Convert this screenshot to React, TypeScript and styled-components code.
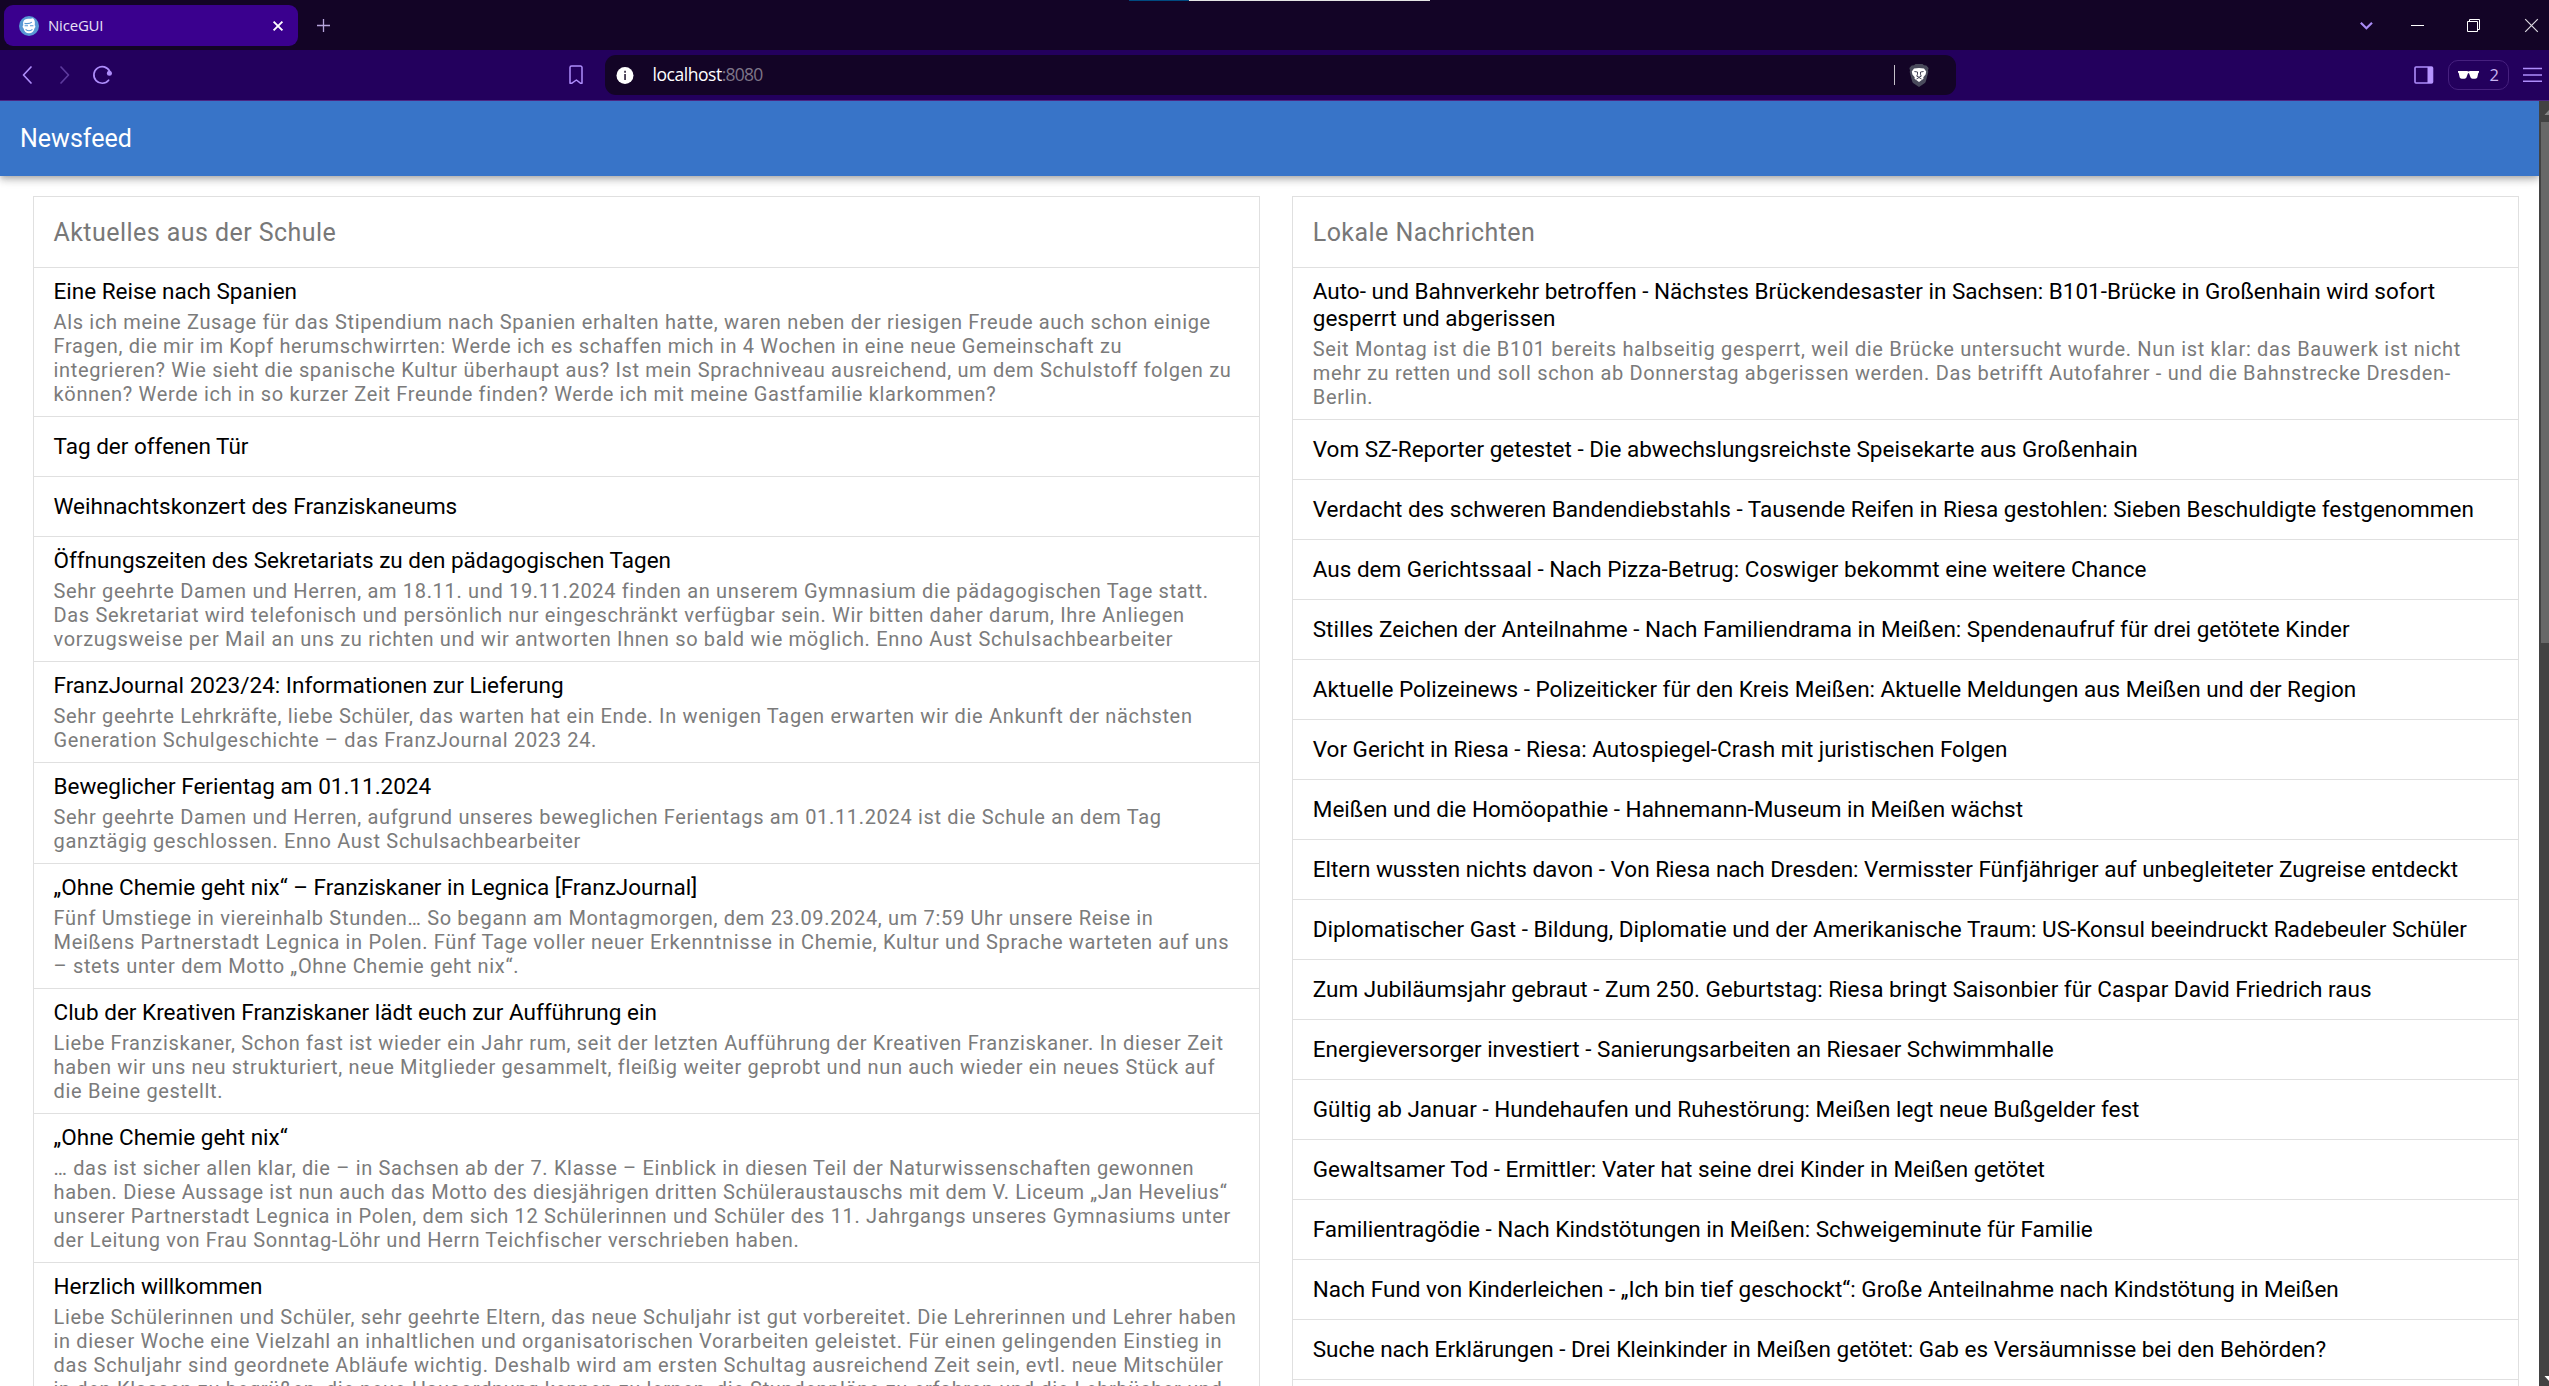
import React from "react";
import styled, { createGlobalStyle } from "styled-components";

const GlobalStyle = createGlobalStyle`
  * { box-sizing: border-box; }
  html, body { margin: 0; padding: 0; background: #fff; overflow: hidden; }
`;

const UI_FONT = '"Open Sans", "Noto Sans", sans-serif';

const Window = styled.div`
  display: flex;
  flex-direction: column;
  width: 2549px;
  height: 1386px;
  overflow: hidden;
  background: #fff;
  font-family: Roboto, sans-serif;
`;

const TabStrip = styled.div`
  position: relative;
  display: flex;
  flex: none;
  align-items: center;
  justify-content: space-between;
  height: 50px;
  padding: 0 11px 0 4px;
  background: #130426;
  font-family: ${UI_FONT};
`;

const EdgeMark = styled.div`
  position: absolute;
  top: 0;
  left: 1129px;
  width: 301px;
  height: 1px;
  background: linear-gradient(to right, #004a80 60px, #e4e6e4 60px);
`;

const Group = styled.div`
  display: flex;
  align-items: center;
`;

const Tab = styled.div`
  display: flex;
  align-items: center;
  width: 294px;
  height: 41px;
  margin: 1px 19px 0 0;
  padding: 0 15px;
  border-radius: 9px;
  background: #3a008e;
`;

const TabTitle = styled.span`
  flex: 1;
  margin-left: 9px;
  padding-bottom: 2px;
  color: #e9e2f6;
  font-size: 15px;
  line-height: 20px;
  letter-spacing: -0.2px;
`;

const Toolbar = styled.div`
  display: flex;
  flex: none;
  align-items: center;
  height: 51px;
  padding: 0 6px 0 22px;
  border-bottom: 1px solid #4c2683;
  background: #23005d;
  font-family: ${UI_FONT};
`;

const NavButtons = styled(Group)`
  width: 546px;
`;

const AddressBar = styled.div`
  display: flex;
  align-items: center;
  width: 1351px;
  height: 40px;
  margin-left: 21px;
  padding: 0 27px 0 11px;
  border-radius: 11px;
  background: #130426;
`;

const Address = styled.span`
  flex: 1;
  margin-left: 18.5px;
  padding-bottom: 1.5px;
  color: #fff;
  font-size: 17.5px;
  line-height: 24px;
  letter-spacing: -0.45px;
`;

const Port = styled.span`
  color: #7d7588;
  letter-spacing: -0.8px;
`;

const AddressDivider = styled.div`
  width: 1px;
  height: 20px;
  margin-right: 14px;
  background: #c4c0c9;
`;

const ToolbarEnd = styled(Group)`
  margin-left: auto;
`;

const PrivatePill = styled.div`
  display: flex;
  align-items: center;
  justify-content: space-between;
  width: 61px;
  height: 30px;
  margin: 0 14px;
  padding: 0 9px;
  border: 1px solid #46207f;
  border-radius: 10px;
  color: #c9b6f3;
  font-size: 16.5px;
  line-height: 26px;
`;

const PillCount = styled.span`
  padding-bottom: 1px;
`;

const Viewport = styled.div`
  display: flex;
  flex: 1;
  min-height: 0;
`;

const Page = styled.div`
  display: flex;
  flex: 1;
  flex-direction: column;
  min-width: 0;
  overflow: hidden;
`;

const Header = styled.header`
  z-index: 1;
  flex: none;
  height: 75px;
  padding-left: 20px;
  background: #3874c8;
  box-shadow:
    0 2.5px 5px -1.25px rgba(0, 0, 0, 0.2),
    0 5px 6.25px rgba(0, 0, 0, 0.14),
    0 1.25px 12.5px rgba(0, 0, 0, 0.12);
  color: #fff;
  font-size: 25px;
  line-height: 76px;
`;

const Columns = styled.main`
  display: grid;
  grid-template-columns: 1fr 1fr;
  flex: 1;
  gap: 32px;
  min-height: 0;
  padding: 20px 20px 0 32.5px;
`;

const List = styled.section`
  border: 1px solid #e0e0e0;
  border-bottom: none;
`;

const ListTitle = styled.div`
  height: 71px;
  padding: 20px 20px 0;
  border-bottom: 1px solid #e0e0e0;
  color: #787878;
  font-size: 25px;
  line-height: 31px;
  letter-spacing: 0.4465px;
`;

const Item = styled.article`
  display: flex;
  flex-direction: column;
  justify-content: center;
  min-height: 60px;
  padding: 10px 20px;
  border-bottom: 1px solid #e0e0e0;
`;

const ItemTitle = styled.div`
  color: #000;
  font-size: 22.5px;
  line-height: 27px;
`;

const ItemCaption = styled.div`
  margin-top: 5px;
  color: #7b7b7b;
  font-size: 20px;
  line-height: 24px;
  letter-spacing: 0.6666px;
`;

const Scrollbar = styled.div`
  display: flex;
  flex: none;
  flex-direction: column;
  justify-content: space-between;
  width: 10px;
  overflow: hidden;
  background: #424242;
`;

const Thumb = styled.div`
  width: 8px;
  height: 521px;
  margin: 0 0 auto 2px;
  background: #686868;
`;

const Icon = styled.svg<{ $left?: number }>`
  display: block;
  flex: none;
  margin-left: ${(p) => p.$left ?? 0}px;
  overflow: visible;
  fill: none;
`;

type Entry = { title: string; text?: string };

const school: Entry[] = [
  {
    title: "Eine Reise nach Spanien",
    text: "Als ich meine Zusage für das Stipendium nach Spanien erhalten hatte, waren neben der riesigen Freude auch schon einige Fragen, die mir im Kopf herumschwirrten: Werde ich es schaffen mich in 4 Wochen in eine neue Gemeinschaft zu integrieren? Wie sieht die spanische Kultur überhaupt aus? Ist mein Sprachniveau ausreichend, um dem Schulstoff folgen zu können? Werde ich in so kurzer Zeit Freunde finden? Werde ich mit meine Gastfamilie klarkommen?",
  },
  { title: "Tag der offenen Tür" },
  { title: "Weihnachtskonzert des Franziskaneums" },
  {
    title: "Öffnungszeiten des Sekretariats zu den pädagogischen Tagen",
    text: "Sehr geehrte Damen und Herren, am 18.11. und 19.11.2024 finden an unserem Gymnasium die pädagogischen Tage statt. Das Sekretariat wird telefonisch und persönlich nur eingeschränkt verfügbar sein. Wir bitten daher darum, Ihre Anliegen vorzugsweise per Mail an uns zu richten und wir antworten Ihnen so bald wie möglich. Enno Aust Schulsachbearbeiter",
  },
  {
    title: "FranzJournal 2023/24: Informationen zur Lieferung",
    text: "Sehr geehrte Lehrkräfte, liebe Schüler, das warten hat ein Ende. In wenigen Tagen erwarten wir die Ankunft der nächsten Generation Schulgeschichte – das FranzJournal 2023 24.",
  },
  {
    title: "Beweglicher Ferientag am 01.11.2024",
    text: "Sehr geehrte Damen und Herren, aufgrund unseres beweglichen Ferientags am 01.11.2024 ist die Schule an dem Tag ganztägig geschlossen. Enno Aust Schulsachbearbeiter",
  },
  {
    title: "„Ohne Chemie geht nix“ – Franziskaner in Legnica [FranzJournal]",
    text: "Fünf Umstiege in viereinhalb Stunden… So begann am Montagmorgen, dem 23.09.2024, um 7:59 Uhr unsere Reise in Meißens Partnerstadt Legnica in Polen. Fünf Tage voller neuer Erkenntnisse in Chemie, Kultur und Sprache warteten auf uns – stets unter dem Motto „Ohne Chemie geht nix“.",
  },
  {
    title: "Club der Kreativen Franziskaner lädt euch zur Aufführung ein",
    text: "Liebe Franziskaner, Schon fast ist wieder ein Jahr rum, seit der letzten Aufführung der Kreativen Franziskaner. In dieser Zeit haben wir uns neu strukturiert, neue Mitglieder gesammelt, fleißig weiter geprobt und nun auch wieder ein neues Stück auf die Beine gestellt.",
  },
  {
    title: "„Ohne Chemie geht nix“",
    text: "… das ist sicher allen klar, die – in Sachsen ab der 7. Klasse – Einblick in diesen Teil der Naturwissenschaften gewonnen haben. Diese Aussage ist nun auch das Motto des diesjährigen dritten Schüleraustauschs mit dem V. Liceum „Jan Hevelius“ unserer Partnerstadt Legnica in Polen, dem sich 12 Schülerinnen und Schüler des 11. Jahrgangs unseres Gymnasiums unter der Leitung von Frau Sonntag-Löhr und Herrn Teichfischer verschrieben haben.",
  },
  {
    title: "Herzlich willkommen",
    text: "Liebe Schülerinnen und Schüler, sehr geehrte Eltern, das neue Schuljahr ist gut vorbereitet. Die Lehrerinnen und Lehrer haben in dieser Woche eine Vielzahl an inhaltlichen und organisatorischen Vorarbeiten geleistet. Für einen gelingenden Einstieg in das Schuljahr sind geordnete Abläufe wichtig. Deshalb wird am ersten Schultag ausreichend Zeit sein, evtl. neue Mitschüler in den Klassen zu begrüßen, die neue Hausordnung kennen zu lernen, die Stundenpläne zu erfahren und die Lehrbücher und",
  },
];

const local: Entry[] = [
  {
    title: "Auto- und Bahnverkehr betroffen - Nächstes Brückendesaster in Sachsen: B101-Brücke in Großenhain wird sofort gesperrt und abgerissen",
    text: "Seit Montag ist die B101 bereits halbseitig gesperrt, weil die Brücke untersucht wurde. Nun ist klar: das Bauwerk ist nicht mehr zu retten und soll schon ab Donnerstag abgerissen werden. Das betrifft Autofahrer - und die Bahnstrecke Dresden-Berlin.",
  },
  { title: "Vom SZ-Reporter getestet - Die abwechslungsreichste Speisekarte aus Großenhain" },
  { title: "Verdacht des schweren Bandendiebstahls - Tausende Reifen in Riesa gestohlen: Sieben Beschuldigte festgenommen" },
  { title: "Aus dem Gerichtssaal - Nach Pizza-Betrug: Coswiger bekommt eine weitere Chance" },
  { title: "Stilles Zeichen der Anteilnahme - Nach Familiendrama in Meißen: Spendenaufruf für drei getötete Kinder" },
  { title: "Aktuelle Polizeinews - Polizeiticker für den Kreis Meißen: Aktuelle Meldungen aus Meißen und der Region" },
  { title: "Vor Gericht in Riesa - Riesa: Autospiegel-Crash mit juristischen Folgen" },
  { title: "Meißen und die Homöopathie - Hahnemann-Museum in Meißen wächst" },
  { title: "Eltern wussten nichts davon - Von Riesa nach Dresden: Vermisster Fünfjähriger auf unbegleiteter Zugreise entdeckt" },
  { title: "Diplomatischer Gast - Bildung, Diplomatie und der Amerikanische Traum: US-Konsul beeindruckt Radebeuler Schüler" },
  { title: "Zum Jubiläumsjahr gebraut - Zum 250. Geburtstag: Riesa bringt Saisonbier für Caspar David Friedrich raus" },
  { title: "Energieversorger investiert - Sanierungsarbeiten an Riesaer Schwimmhalle" },
  { title: "Gültig ab Januar - Hundehaufen und Ruhestörung: Meißen legt neue Bußgelder fest" },
  { title: "Gewaltsamer Tod - Ermittler: Vater hat seine drei Kinder in Meißen getötet" },
  { title: "Familientragödie - Nach Kindstötungen in Meißen: Schweigeminute für Familie" },
  { title: "Nach Fund von Kinderleichen - „Ich bin tief geschockt“: Große Anteilnahme nach Kindstötung in Meißen" },
  { title: "Suche nach Erklärungen - Drei Kleinkinder in Meißen getötet: Gab es Versäumnisse bei den Behörden?" },
];

function Feed({ title, entries }: { title: string; entries: Entry[] }) {
  return (
    <List>
      <ListTitle>{title}</ListTitle>
      {entries.map((e) => (
        <Item key={e.title}>
          <ItemTitle>{e.title}</ItemTitle>
          {e.text && <ItemCaption>{e.text}</ItemCaption>}
        </Item>
      ))}
    </List>
  );
}

const Favicon = () => (
  <Icon width="20" height="20" viewBox="0 0 20 20">
    <circle cx="10" cy="10" r="10" fill="#5898d4" />
    <path d="M4.3 9.2C3.4 5.2 5.4 2.9 9 2.8c2-.1 3.4-.3 5-.6 1.6 1.400 2.300 3.600 1.700 7 .9.300.9 2.300-.1 2.700-.6 3.400-2.800 5.300-5.600 5.300s-5-1.900-5.600-5.300c-1-.4-1-2.400-.1-2.700z" fill="#fff" />
    <path d="M5.500 7.400c2.700.4 6-.1 7.400-1.300M5.600 9.800h3.400M11 9.800h3.400M6.600 13.300c2 1.700 4.800 1.700 6.800 0" stroke="#5898d4" strokeWidth="1.100" />
  </Icon>
);

const BraveIcon = () => (
  <Icon width="20" height="23" viewBox="0 0 20 23">
    <path d="M5 1.200 6.500 0h7L15 1.200l2.300.2L19.600 4 19 6.500l.3 1.500-2.500 9.400c-.3 1-.8 1.600-1.600 2.200L10 23l-5.200-3.400c-.8-.6-1.300-1.200-1.600-2.200L.7 8 1 6.500.4 4l2.300-2.600z" fill="#4a4b5c" />
    <path d="M5 4.500 10 4l5 .5L17.200 7.500l-.6 3-2.300 2.700.2 1.500L10 18l-4.500-3.300.2-1.500-2.300-2.700-.6-3z" fill="#fff" />
    <path d="M5.400 7.500 8.500 8v2.200l-.7 2 2.200 1 2.200-1-.7-2V8l3.100-.5M7.500 15 10 13.500l2.500 1.500" stroke="#34344a" strokeWidth=".9" />
  </Icon>
);

export default function App() {
  return (
    <Window>
      <GlobalStyle />
      <TabStrip>
        <EdgeMark />
        <Group>
          <Tab>
            <Favicon />
            <TabTitle>NiceGUI</TabTitle>
            <Icon width="10" height="10" viewBox="0 0 10 10" stroke="#fff" strokeWidth="1.900">
              <path d="M.6.6 9.400 9.400M9.400.6.6 9.400" />
            </Icon>
          </Tab>
          <Icon width="13" height="13" viewBox="0 0 13 13" stroke="#b7a5dc" strokeWidth="1.300">
            <path d="M6.500 0v13M0 6.500h13" />
          </Icon>
        </Group>
        <Group>
          <Icon width="13" height="13" viewBox="0 0 13 13" stroke="#a98bf5" strokeWidth="2.200">
            <path d="M.8 3.700 6.400 9.200 12 3.700" />
          </Icon>
          <Icon $left={38} width="13" height="13" viewBox="0 0 13 13" stroke="#fff">
            <path d="M0 6.500h13" />
          </Icon>
          <Icon $left={43} width="13" height="13" viewBox="0 0 13 13" stroke="#fff">
            <path d="M.5 2.500h10v10H.5zM2.500 2.500v-2h10v10h-2" />
          </Icon>
          <Icon $left={45} width="13" height="13" viewBox="0 0 13 13" stroke="#dcd9e0" strokeWidth="1.200">
            <path d="M.2.200 12.800 12.800M12.800.2.200 12.800" />
          </Icon>
        </Group>
      </TabStrip>

      <Toolbar>
        <NavButtons>
          <Icon width="10" height="18" viewBox="0 0 10 18" stroke="#ae8dfb" strokeWidth="1.700" strokeLinecap="round" strokeLinejoin="round">
            <path d="M9 1 1.500 9 9 17" />
          </Icon>
          <Icon $left={28} width="10" height="18" viewBox="0 0 10 18" stroke="#5d3a9d" strokeWidth="1.700" strokeLinecap="round" strokeLinejoin="round">
            <path d="M1 1 8.500 9 1 17" />
          </Icon>
          <Icon $left={23} width="20" height="18" viewBox="0 0 20 18" stroke="#ae8dfb" strokeWidth="1.700" strokeLinecap="round">
            <path d="M15.600 14.200A8.300 8.300 0 1 1 16.600 5.200" />
            <circle cx="16.400" cy="7.200" r="2.500" fill="#ae8dfb" stroke="none" />
          </Icon>
        </NavButtons>
        <Icon width="16" height="20" viewBox="0 0 16 20" stroke="#ae8dfb" strokeWidth="1.500" strokeLinejoin="round">
          <path d="M3.500 1h9a1.500 1.500 0 0 1 1.500 1.500V18.300h-1.300L8.400 15l-4.800 3.300H2V2.500A1.500 1.500 0 0 1 3.500 1z" />
        </Icon>
        <AddressBar>
          <Icon width="18" height="18" viewBox="0 0 18 18">
            <circle cx="9" cy="9.400" r="8.500" fill="#fff" />
            <path d="M8.100 4.800h1.900v1.900H8.100zM8.100 8h1.900v6H8.100z" fill="#4a4055" />
          </Icon>
          <Address>
            localhost<Port>:8080</Port>
          </Address>
          <AddressDivider />
          <BraveIcon />
        </AddressBar>
        <ToolbarEnd>
          <Icon width="20" height="18" viewBox="0 0 20 18">
            <rect x="1" y="1" width="17.500" height="16" rx="1" stroke="#ae8dfb" strokeWidth="1.600" />
            <path d="M13.500 1h5v16h-5z" fill="#b794ff" />
          </Icon>
          <PrivatePill>
            <Icon width="21" height="8" viewBox="0 0 21 8">
              <path d="M0 0h9l1.500.6L12 0h9v1.500l-.7.500-.9 4c-.3 1.200-1 1.700-2.200 1.700h-2.600c-1.100 0-1.800-.6-2.200-1.600l-1.300-3.700-.6-.3-.6.3-1.300 3.700C8.200 7.100 7.500 7.700 6.400 7.700H3.800C2.600 7.700 1.900 7.200 1.600 6L.7 2 0 1.500z" fill="#fff" />
            </Icon>
            <PillCount>2</PillCount>
          </PrivatePill>
          <Icon width="20" height="16" viewBox="0 0 20 16" stroke="#ae8dfb" strokeWidth="1.500">
            <path d="M0 1.500h19M0 8h19M0 14.200h19" />
          </Icon>
        </ToolbarEnd>
      </Toolbar>

      <Viewport>
        <Page>
          <Header>Newsfeed</Header>
          <Columns>
            <Feed title="Aktuelles aus der Schule" entries={school} />
            <Feed title="Lokale Nachrichten" entries={local} />
          </Columns>
        </Page>
        <Scrollbar>
          <Icon width="21" height="21" viewBox="0 0 21 21">
            <path d="M5.500 14 10.500 8.500 15.500 14z" fill="#868686" />
          </Icon>
          <Thumb />
          <Icon width="21" height="21" viewBox="0 0 21 21">
            <path d="M5.500 11 10.500 16.500 15.500 11z" fill="#fff" />
          </Icon>
        </Scrollbar>
      </Viewport>
    </Window>
  );
}
